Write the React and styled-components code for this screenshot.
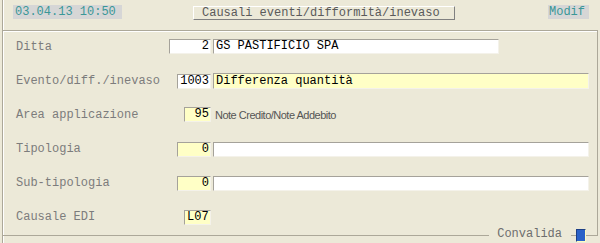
import React from "react";
import styled, { createGlobalStyle } from "styled-components";

const GlobalStyle = createGlobalStyle`
  html, body { margin: 0; padding: 0; background: #ece9d8; }
  body { width: 600px; height: 243px; overflow: hidden; }
  * { box-sizing: border-box; }
`;

const mono = `"Liberation Mono", "DejaVu Sans Mono", monospace`;

const Page = styled.div`
  margin-left: 2px;
  width: 598px;
  height: 243px;
  border-left: 1px solid #aca899;
  box-shadow: inset 1px 0 #ffffff;
  display: flex;
  flex-direction: column;
  font-family: ${mono};
  font-size: 12px;
`;

const Header = styled.div`
  height: 30px;
  display: flex;
  align-items: flex-start;
  padding: 5px 0 0 10px;
`;

const InfoBox = styled.div`
  height: 14px;
  line-height: 14px;
  background: #d6d6d6;
  color: #3a9797;
  padding: 0 ${(p) => p.$pad || 2}px;
  width: ${(p) => p.$w}px;
  margin-left: ${(p) => p.$ml || 0}px;
  white-space: nowrap;
`;

const TitleButton = styled.div`
  margin-left: 71px;
  margin-top: 1px;
  width: 262px;
  height: 14px;
  line-height: 12px;
  border-top: 1px solid #ffffff;
  border-left: 1px solid #ffffff;
  border-right: 1px solid #808080;
  border-bottom: 1px solid #808080;
  color: #5a5a5a;
  padding-left: 8px;
  white-space: nowrap;
`;

const Group = styled.div`
  position: relative;
  width: 595px;
  height: 206px;
  border-top: 1px solid #aca899;
  border-right: 1px solid #aca899;
  border-bottom: 1px solid #aca899;
  box-shadow: inset 0 1px #ffffff;
  padding: 8px 8px 0 13px;
  display: flex;
  flex-direction: column;
  gap: 19.2px;
`;

const Row = styled.div`
  display: grid;
  grid-template-columns: 151px 42px 1fr;
  column-gap: 2px;
  align-items: center;
  height: 15px;
`;

const Label = styled.div`
  color: #7c7c7c;
  white-space: nowrap;
`;

const Field = styled.div`
  height: ${(p) => p.$h || 15}px;
  line-height: ${(p) => (p.$h || 15) - 2}px;
  width: ${(p) => (p.$w ? `${p.$w}px` : "100%")};
  justify-self: ${(p) => (p.$start ? "start" : "end")};
  text-align: ${(p) => p.$align || "left"};
  background: ${(p) => (p.$yellow ? "#ffffc6" : "#ffffff")};
  border-top: 1px solid #a5a29a;
  border-left: 1px solid #a5a29a;
  border-right: 1px solid #f4f2ea;
  border-bottom: 1px solid #f4f2ea;
  color: #000;
  padding: 0 1px 0 2px;
  white-space: nowrap;
  overflow: hidden;
`;

const Note = styled.div`
  font-family: "Liberation Sans", Arial, sans-serif;
  font-size: 11px;
  letter-spacing: -0.5px;
  color: #555;
  padding-left: 2px;
  white-space: nowrap;
`;

const Legend = styled.div`
  position: absolute;
  right: 11px;
  bottom: -7px;
  display: flex;
  align-items: center;
  gap: 5px;
`;

const LegendText = styled.span`
  background: #ece9d8;
  color: #6e6e6e;
  padding: 0 9px 0 8px;
  line-height: 14px;
  margin-top: -3px;
`;

const Indicator = styled.span`
  width: 10px;
  height: 13px;
  background: #2b62c8;
  border-left: 1px solid #1c3f86;
  border-top: 1px solid #1c3f86;
  border-right: 1px solid #fffcc0;
  border-bottom: 1px solid #fffcc0;
`;

const rows = [
  { label: "Ditta", num: "2", numW: 42, text: "GS PASTIFICIO SPA", textW: 286 },
  { label: "Evento/diff./inevaso", num: "1003", numW: 34, text: "Differenza quantità", textYellow: true },
  { label: "Area applicazione", num: "95", numW: 27, numYellow: true, note: "Note Credito/Note Addebito" },
  { label: "Tipologia", num: "0", numW: 34, numYellow: true, text: "" },
  { label: "Sub-tipologia", num: "0", numW: 34, numYellow: true, text: "" },
  { label: "Causale EDI", num: "L07", numW: 27, numYellow: true, left: true },
];

export default function App() {
  return (
    <>
      <GlobalStyle />
      <Page>
        <Header>
          <InfoBox $w={109}>03.04.13 10:50</InfoBox>
          <TitleButton>Causali eventi/difformità/inevaso</TitleButton>
          <InfoBox $w={41} $ml={93} $pad={1}>Modif</InfoBox>
        </Header>
        <Group>
          {rows.map((r) => (
            <Row key={r.label}>
              <Label>{r.label}</Label>
              <Field $w={r.numW} $align={r.left ? "left" : "right"} $yellow={r.numYellow}>
                {r.num}
              </Field>
              {r.note ? (
                <Note>{r.note}</Note>
              ) : r.text !== undefined ? (
                <Field $start $w={r.textW} $yellow={r.textYellow} $h={r.textYellow ? 16 : 15}>
                  {r.text}
                </Field>
              ) : (
                <span />
              )}
            </Row>
          ))}
          <Legend>
            <LegendText>Convalida</LegendText>
            <Indicator />
          </Legend>
        </Group>
      </Page>
    </>
  );
}
